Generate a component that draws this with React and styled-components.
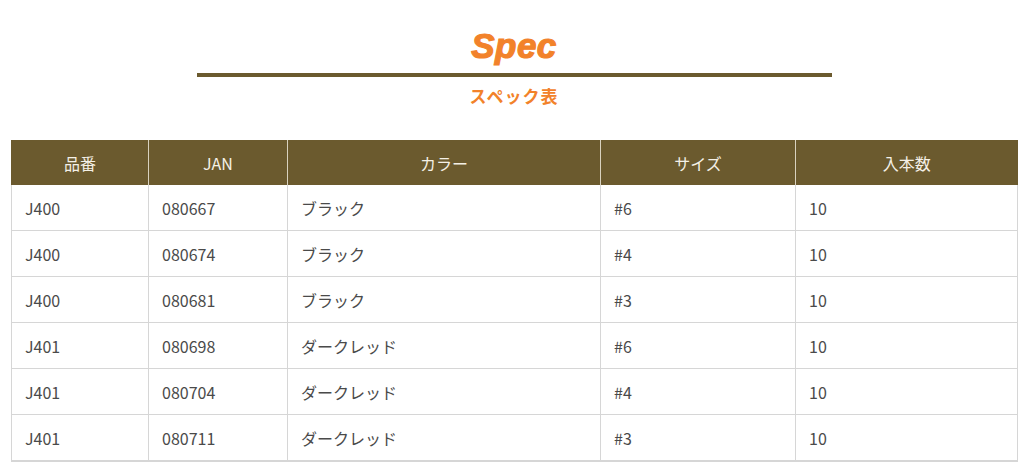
import React from "react";
import styled, { createGlobalStyle } from "styled-components";

const GlobalStyle = createGlobalStyle`
  body {
    margin: 0;
    background: #ffffff;
    font-family: "Noto Sans CJK JP", "Noto Sans", sans-serif;
  }
`;

const Page = styled.div`
  width: 1024px;
  padding: 24px 7px 0 11px;
  box-sizing: border-box;
`;

const Heading = styled.div`
  display: flex;
  flex-direction: column;
  align-items: center;
`;

const Title = styled.h2`
  margin: 0;
  font-family: "Liberation Sans", "DejaVu Sans", sans-serif;
  font-weight: 700;
  font-style: italic;
  font-size: 35px;
  line-height: 44px;
  color: #f2822a;
  -webkit-text-stroke: 1.2px #f2822a;
  letter-spacing: 0.5px;
`;

const Rule = styled.div`
  width: 635px;
  height: 4px;
  margin-top: 5px;
  background: #6b5a2e;
`;

const Subtitle = styled.div`
  margin-top: 7px;
  font-size: 17px;
  font-weight: 700;
  line-height: 24px;
  color: #f2822a;
  letter-spacing: 1px;
`;

const Table = styled.table`
  margin-top: 32px;
  width: 1006px;
  border-collapse: collapse;
  table-layout: fixed;
  border-bottom: 2px solid #d6d6d6;
`;

const Th = styled.th`
  height: 45px;
  padding: 0;
  background: #6b5a2e;
  color: #f4f0e6;
  font-weight: 400;
  font-size: 16px;
  text-align: center;
  border-left: 1px solid #d9d2bf;
  &:first-child {
    border-left: 1px solid #6b5a2e;
  }
`;

const Td = styled.td`
  height: 45px;
  padding: 0 0 0 13px;
  font-size: 16px;
  color: #4a4a4a;
  border: 1px solid #d6d6d6;
  border-top: none;
`;

const widths = [137, 139, 313, 195, 222];
const headers = ["品番", "JAN", "カラー", "サイズ", "入本数"];

const rows = [
  ["J400", "080667", "ブラック", "#6", "10"],
  ["J400", "080674", "ブラック", "#4", "10"],
  ["J400", "080681", "ブラック", "#3", "10"],
  ["J401", "080698", "ダークレッド", "#6", "10"],
  ["J401", "080704", "ダークレッド", "#4", "10"],
  ["J401", "080711", "ダークレッド", "#3", "10"],
];

export default function App() {
  return (
    <Page>
      <GlobalStyle />
      <Heading>
        <Title>Spec</Title>
        <Rule />
        <Subtitle>スペック表</Subtitle>
      </Heading>
      <Table>
        <colgroup>
          {widths.map((w, i) => (
            <col key={i} style={{ width: w }} />
          ))}
        </colgroup>
        <thead>
          <tr>
            {headers.map((h) => (
              <Th key={h}>{h}</Th>
            ))}
          </tr>
        </thead>
        <tbody>
          {rows.map((r, i) => (
            <tr key={i}>
              {r.map((c, j) => (
                <Td key={j}>{c}</Td>
              ))}
            </tr>
          ))}
        </tbody>
      </Table>
    </Page>
  );
}
